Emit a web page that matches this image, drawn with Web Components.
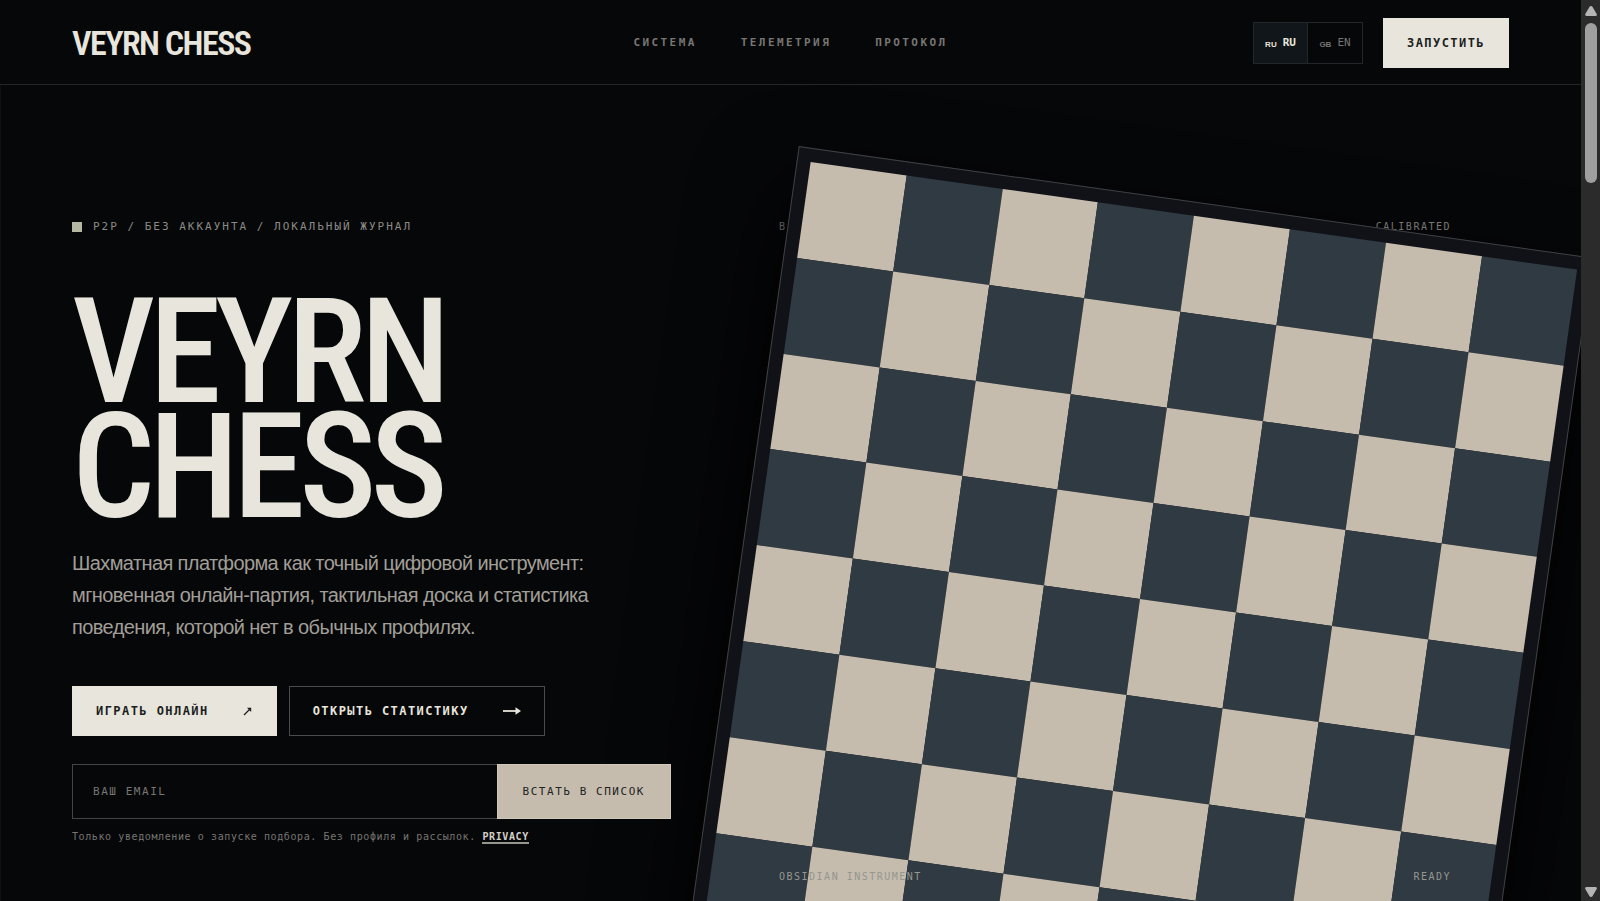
<!DOCTYPE html>
<html lang="ru">
<head>
<meta charset="utf-8">
<title>Veyrn Chess</title>
<style>
    :root {
        --ink: #060709;
        --bone: #e8e5dc;
        --sand: #c5bcad;
        --slate: #303a42;
        --muted: #8c8a85;
        --mono: "DejaVu Sans Mono", monospace;
        --sans: "Liberation Sans", Arial, sans-serif;
        --display: "Roboto Condensed", "Roboto", sans-serif;
    }

    body {
        margin: 0;
        background: var(--ink);
        color: var(--bone);
        font-family: var(--sans);
    }
</style>
</head>
<body>
<veyrn-page>
    <site-header slot="header"></site-header>
    <hero-section>
        <hero-copy slot="copy">
            <action-link kind="solid" arrow="diagonal" href="#play">ИГРАТЬ ОНЛАЙН</action-link>
            <action-link kind="outline" arrow="right" href="#stats">ОТКРЫТЬ СТАТИСТИКУ</action-link>
            <waitlist-form slot="form"></waitlist-form>
        </hero-copy>
        <board-stage slot="stage"></board-stage>
    </hero-section>
</veyrn-page>

<script>
class VeyrnPage extends HTMLElement {
    constructor(){
        super();
        const root = this.attachShadow({mode:'open'});
        root.innerHTML = `
            <style>
                :host {
                    display: grid;
                    grid-template-columns: minmax(0, 1fr) 19px;
                    height: 100vh;
                    overflow: hidden;
                }

                .page {
                    display: flex;
                    flex-direction: column;
                    min-height: 0;
                }
            </style>
            <div class="page">
                <slot name="header"></slot>
                <slot></slot>
            </div>
            <scroll-rail></scroll-rail>
        `;
    }
}
customElements.define('veyrn-page', VeyrnPage);

class ScrollRail extends HTMLElement {
    constructor(){
        super();
        const root = this.attachShadow({mode:'open'});
        root.innerHTML = `
            <style>
                :host {
                    display: flex;
                    flex-direction: column;
                    align-items: center;
                    gap: 7px;
                    padding: 6px 0 4px;
                    background: #2b2b2b;
                }

                .thumb {
                    width: 12px;
                    height: 160px;
                    border-radius: 6px;
                    background: #9f9f9f;
                }

                svg {
                    display: block;
                    fill: #b4b4b4;
                }

                .down {
                    margin-top: auto;
                }
            </style>
            <svg width="12" height="10" viewBox="0 0 12 10"><path d="M6 0 Q7 0 7.6 1 L11.7 8 Q12.3 10 10.5 10 H1.5 Q-.3 10 .3 8 L4.4 1 Q5 0 6 0Z"/></svg>
            <div class="thumb"></div>
            <svg class="down" width="12" height="10" viewBox="0 0 12 10"><path d="M6 10 Q7 10 7.6 9 L11.7 2 Q12.3 0 10.5 0 H1.5 Q-.3 0 .3 2 L4.4 9 Q5 10 6 10Z"/></svg>
        `;
    }
}
customElements.define('scroll-rail', ScrollRail);

class SiteHeader extends HTMLElement {
    constructor(){
        super();
        const root = this.attachShadow({mode:'open'});
        root.innerHTML = `
            <style>
                :host {
                    display: grid;
                    grid-template-columns: 1fr auto 1fr;
                    align-items: center;
                    padding: 18px 72px 16px;
                    border-bottom: 1px solid #25272a;
                }

                a {
                    color: inherit;
                    text-decoration: none;
                }

                .logo {
                    font: 600 34px/40px var(--display);
                    letter-spacing: -0.045em;
                }

                nav {
                    display: flex;
                    gap: 44px;
                    color: #777672;
                    font: 700 11px/24px var(--mono);
                    letter-spacing: 0.22em;
                }

                .tools {
                    display: flex;
                    justify-content: flex-end;
                    align-items: center;
                    gap: 20px;
                }

                .launch {
                    height: 50px;
                    padding: 0 23px;
                    border: 1px solid var(--bone);
                    border-radius: 0;
                    background: var(--bone);
                    color: #1c1e20;
                    font: 700 12px/24px var(--mono);
                    letter-spacing: 0.12em;
                }
            </style>
            <a class="logo" href="#top">VEYRN CHESS</a>
            <nav>
                <a href="#system">СИСТЕМА</a>
                <a href="#telemetry">ТЕЛЕМЕТРИЯ</a>
                <a href="#protocol">ПРОТОКОЛ</a>
            </nav>
            <div class="tools">
                <lang-switch></lang-switch>
                <button class="launch" type="button">ЗАПУСТИТЬ</button>
            </div>
        `;
    }
}
customElements.define('site-header', SiteHeader);

class LangSwitch extends HTMLElement {
    constructor(){
        super();
        const root = this.attachShadow({mode:'open'});
        root.innerHTML = `
            <style>
                :host {
                    display: flex;
                    height: 40px;
                    border: 1px solid #23272b;
                }

                button {
                    display: flex;
                    align-items: center;
                    justify-content: center;
                    gap: 6px;
                    width: 54px;
                    padding: 0;
                    border: 0;
                    background: none;
                    color: #777672;
                    font: 400 11px/24px var(--mono);
                }

                button[aria-pressed="true"] {
                    background: #11161a;
                    border-right: 1px solid #23272b;
                    color: var(--bone);
                    font-weight: 700;
                }

                small {
                    font: 700 8px/8px var(--sans);
                    padding-top: 3px;
                }
            </style>
            <button type="button" aria-pressed="true"><small>RU</small><span>RU</span></button>
            <button type="button" aria-pressed="false"><small>GB</small><span>EN</span></button>
        `;
    }
}
customElements.define('lang-switch', LangSwitch);

class HeroSection extends HTMLElement {
    constructor(){
        super();
        const root = this.attachShadow({mode:'open'});
        root.innerHTML = `
            <style>
                :host {
                    display: grid;
                    flex: 1;
                    box-sizing: border-box;
                    grid-template-columns: minmax(0, 599fr) minmax(0, 672fr);
                    gap: 108px;
                    min-height: 0;
                    padding: 130px 130px 12px 71px;
                    border-left: 1px solid #0d0f11;
                    overflow: hidden;
                }
            </style>
            <slot name="copy"></slot>
            <slot name="stage"></slot>
        `;
    }
}
customElements.define('hero-section', HeroSection);

class HeroCopy extends HTMLElement {
    constructor(){
        super();
        const root = this.attachShadow({mode:'open'});
        root.innerHTML = `
            <style>
                /* stays above the shadow that the board casts */
                :host {
                    display: block;
                    position: relative;
                    z-index: 1;
                }

                .eyebrow {
                    display: flex;
                    align-items: center;
                    gap: 11px;
                    margin: 0;
                    color: var(--muted);
                    font: 400 11px/24px var(--mono);
                    letter-spacing: 2px;
                }

                .eyebrow::before {
                    content: "";
                    width: 10px;
                    height: 10px;
                    background: #b7b8a4;
                }

                h1 {
                    margin: 56px 0 22px;
                    font: 500 146px/115px var(--display);
                    letter-spacing: -6px;
                }

                .lead {
                    max-width: 540px;
                    margin: 0;
                    color: #a19e97;
                    font: 400 20px/32px var(--sans);
                    letter-spacing: -0.03em;
                }

                .actions {
                    display: flex;
                    gap: 12px;
                    margin: 43px 0 28px;
                }
            </style>
            <p class="eyebrow">P2P / БЕЗ АККАУНТА / ЛОКАЛЬНЫЙ ЖУРНАЛ</p>
            <h1>VEYRN<br>CHESS</h1>
            <p class="lead">Шахматная платформа как точный цифровой инструмент: мгновенная онлайн-партия, тактильная доска и статистика поведения, которой нет в обычных профилях.</p>
            <div class="actions"><slot></slot></div>
            <slot name="form"></slot>
        `;
    }
}
customElements.define('hero-copy', HeroCopy);

const ARROWS = {
    diagonal: '<svg width="10" height="10" viewBox="0 0 10 10"><path d="M1 9L7 3" stroke="currentColor" stroke-width="1.2"/><path d="M4 1.8H8.2V6Z" fill="currentColor"/></svg>',
    right: '<svg width="18" height="10" viewBox="0 0 18 10"><path d="M0 5H14" stroke="currentColor" stroke-width="1.8"/><path d="M12.5 1.2L18 5L12.5 8.8Z" fill="currentColor"/></svg>'
};

class ActionLink extends HTMLElement {
    constructor(){
        super();
        this.attachShadow({mode:'open'});
    }

    connectedCallback(){
        const href = this.getAttribute('href');
        const arrow = ARROWS[this.getAttribute('arrow')];
        this.shadowRoot.innerHTML = `
            <style>
                :host {
                    display: block;
                }

                a {
                    display: flex;
                    align-items: center;
                    gap: 34px;
                    height: 48px;
                    padding: 0 23px;
                    border: 1px solid #4a4b4c;
                    color: var(--bone);
                    font: 700 12px/24px var(--mono);
                    letter-spacing: 0.12em;
                    text-decoration: none;
                    white-space: nowrap;
                }

                :host([kind="solid"]) a {
                    border-color: var(--bone);
                    background: var(--bone);
                    color: #1c1e20;
                }
            </style>
            <a href="${href}"><slot></slot>${arrow}</a>
        `;
    }
}
customElements.define('action-link', ActionLink);

class WaitlistForm extends HTMLElement {
    constructor(){
        super();
        const root = this.attachShadow({mode:'open'});
        root.innerHTML = `
            <style>
                :host {
                    display: block;
                }

                form {
                    display: flex;
                    height: 55px;
                }

                input, button {
                    box-sizing: border-box;
                    margin: 0;
                    border: 1px solid #434445;
                    border-radius: 0;
                    font: 400 11px/24px var(--mono);
                    letter-spacing: 0.14em;
                }

                input {
                    flex: 1;
                    min-width: 0;
                    padding: 0 20px;
                    border-right: 0;
                    background: none;
                    color: var(--bone);
                }

                input::placeholder {
                    color: #777672;
                    opacity: 1;
                }

                button {
                    padding: 0 25px;
                    border-color: #d0c9bb;
                    background: var(--sand);
                    color: #22231f;
                }

                p {
                    margin: 6px 0 0;
                    color: #777672;
                    font: 400 10px/24px var(--mono);
                    letter-spacing: 0.06em;
                }

                a {
                    border-bottom: 2px solid #96948e;
                    color: #d5d1c8;
                    font-weight: 700;
                    text-decoration: none;
                }
            </style>
            <form>
                <input type="email" aria-label="Email" placeholder="ВАШ EMAIL">
                <button type="submit">ВСТАТЬ В СПИСОК</button>
            </form>
            <p>Только уведомление о запуске подбора. Без профиля и рассылок. <a href="#privacy">PRIVACY</a></p>
        `;
    }
}
customElements.define('waitlist-form', WaitlistForm);

class BoardStage extends HTMLElement {
    constructor(){
        super();
        const root = this.attachShadow({mode:'open'});
        root.innerHTML = `
            <style>
                :host {
                    display: flex;
                    flex-direction: column;
                    justify-content: space-between;
                    position: relative;
                    color: var(--muted);
                    font: 400 10px/24px var(--mono);
                    letter-spacing: 0.15em;
                }

                .labels {
                    display: flex;
                    justify-content: space-between;
                }

                .bottom {
                    position: relative;
                    color: #949690;
                }

                /* the tilted board runs past the stage and is cut by the hero */
                chess-board {
                    position: absolute;
                    top: -17px;
                    left: -6%;
                    width: 119.4%;
                    transform: rotate(8deg);
                }
            </style>
            <div class="labels"><span>B</span><span>CALIBRATED</span></div>
            <chess-board></chess-board>
            <div class="labels bottom"><span>OBSIDIAN INSTRUMENT</span><span>READY</span></div>
        `;
    }
}
customElements.define('board-stage', BoardStage);

class ChessBoard extends HTMLElement {
    constructor(){
        super();
        const root = this.attachShadow({mode:'open'});
        let squares = '';
        for (let row = 0; row < 8; row++) {
            for (let col = 0; col < 8; col++) {
                squares += `<i class="${(row + col) % 2 ? 'dark' : 'light'}"></i>`;
            }
        }
        root.innerHTML = `
            <style>
                :host {
                    display: grid;
                    box-sizing: border-box;
                    grid-template: repeat(8, 1fr) / repeat(8, 1fr);
                    aspect-ratio: 1;
                    padding: 13px;
                    border: 1px solid #3f4042;
                    background: #101218;
                    box-shadow: 0 40px 90px #000;
                }

                .light {
                    background: var(--sand);
                }

                .dark {
                    background: var(--slate);
                }
            </style>
            ${squares}
        `;
    }
}
customElements.define('chess-board', ChessBoard);
</script>
</body>
</html>
